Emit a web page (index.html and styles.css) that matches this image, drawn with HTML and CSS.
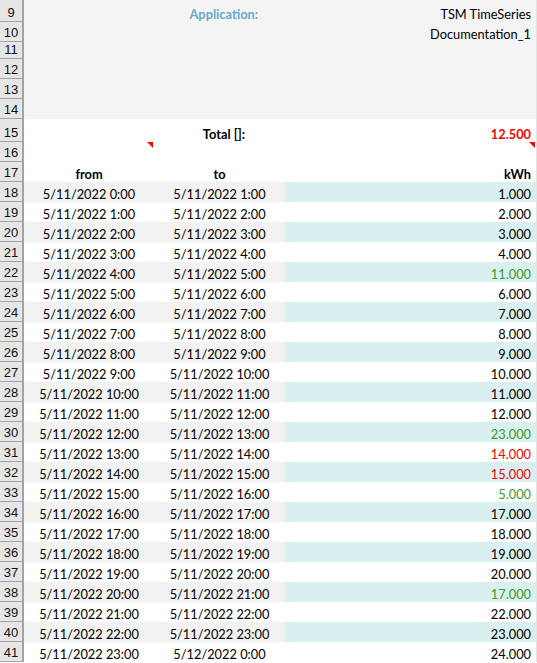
FILE: index.html
```html
<!DOCTYPE html>
<html>
<head>
  <title>TSM TimeSeries - Documentation_1</title>
  <link rel="stylesheet" href="styles.css">
</head>
<body>
  <div class="sheet" id="sheet">
    <div class="row info h22">
      <div class="rh">9</div>
      <div class="cell a"></div>
      <div class="cell b label app">Application:</div>
      <div class="cell c">TSM TimeSeries</div>
    </div>
    <div class="row info">
      <div class="rh">10</div>
      <div class="cell a"></div>
      <div class="cell b"></div>
      <div class="cell c">Documentation_1</div>
    </div>
    <div class="row info h17">
      <div class="rh">11</div>
      <div class="cell a"></div><div class="cell b"></div><div class="cell c"></div>
    </div>
    <div class="row info">
      <div class="rh">12</div>
      <div class="cell a"></div><div class="cell b"></div><div class="cell c"></div>
    </div>
    <div class="row info">
      <div class="rh">13</div>
      <div class="cell a"></div><div class="cell b"></div><div class="cell c"></div>
    </div>
    <div class="row info">
      <div class="rh">14</div>
      <div class="cell a"></div><div class="cell b"></div><div class="cell c"></div>
    </div>
    <div class="row h23">
      <div class="rh">15</div>
      <div class="cell a"></div>
      <div class="cell b label total">Total []:</div>
      <div class="cell c sum">12.500</div>
    </div>
    <div class="row">
      <div class="rh">16</div>
      <div class="cell a"><span class="note"></span></div>
      <div class="cell b"></div>
      <div class="cell c"><span class="note"></span></div>
    </div>
    <div class="row head">
      <div class="rh">17</div>
      <div class="cell a">from</div>
      <div class="cell b">to</div>
      <div class="cell c">kWh</div>
    </div>
  </div>

  <script>
    // hourly values, colour flag: g = green, r = red
    const values = [
      [1], [2], [3], [4], [11, 'g'], [6], [7], [8], [9], [10], [11], [12],
      [23, 'g'], [14, 'r'], [15, 'r'], [5, 'g'], [17], [18], [19], [20],
      [17, 'g'], [22], [23], [24]
    ];

    function stamp(h) {
      const day = h >= 24 ? '5/12/2022' : '5/11/2022';
      return day + ' ' + (h % 24) + ':00';
    }

    const sheet = document.getElementById('sheet');
    values.forEach((v, i) => {
      const row = document.createElement('div');
      row.className = 'row data' + (i % 2 === 0 ? ' band' : '');
      const cls = v[1] === 'g' ? ' green' : v[1] === 'r' ? ' red' : '';
      row.innerHTML = `
        <div class="rh">${18 + i}</div>
        <div class="cell a">${stamp(i)}</div>
        <div class="cell b">${stamp(i + 1)}</div>
        <div class="cell c${cls}">${v[0].toFixed(3)}</div>
      `;
      sheet.appendChild(row);
    });
  </script>
</body>
</html>
```

FILE: styles.css
```css
body {
  margin: 0;
  background-color: #fff;
  color: #000;
  font-family: Lato, "Open Sans", sans-serif;
  font-size: 12.8px;
}

.sheet { width: 537px; }

.row { display: flex; height: 20px; }
.row.h22 { height: 22px; }
.row.h17 { height: 17px; }
.row.h23 { height: 23px; }

.rh {
  width: 24px;
  flex: none;
  box-sizing: border-box;
  display: flex;
  align-items: flex-end;
  justify-content: center;
  background-color: #e6e6e6;
  border-right: 2px solid #a3a3a3;
  border-bottom: 1px solid #a3a3a3;
  font-family: "Liberation Sans", Arial, sans-serif;
  font-size: 13px;
  line-height: 16px;
  color: #111;
}

.cell {
  box-sizing: border-box;
  display: flex;
  align-items: flex-end;
  line-height: 16px;
  white-space: nowrap;
}
.cell.a { width: 130px; justify-content: center; position: relative; }
.cell.b { width: 131px; justify-content: center; }
.cell.c {
  width: 252px;
  justify-content: flex-end;
  padding-right: 5px;
  border-right: 1px solid #e4e4e4;
  position: relative;
}

.info .cell { background-color: #f4f4f4; }

.label { justify-content: flex-end !important; font-weight: bold; }
.label.app { color: #65aaca; padding-right: 27px; }
.label.total { padding-right: 40px; }
.sum { color: #ff0000; font-weight: bold; }

.head .cell { font-weight: bold; }

.band .cell.a,
.band .cell.b { background-color: #f2f2f2; }
.band .cell.c { background-color: #daf0f0; }

.green { color: #3c9a2c; }
.red { color: #ff0000; }

/* comment markers */
.note {
  position: absolute;
  top: 0;
  right: 1px;
  width: 6px;
  height: 6px;
  background-color: #ff0000;
  clip-path: polygon(0 0, 100% 0, 100% 100%);
}
```
